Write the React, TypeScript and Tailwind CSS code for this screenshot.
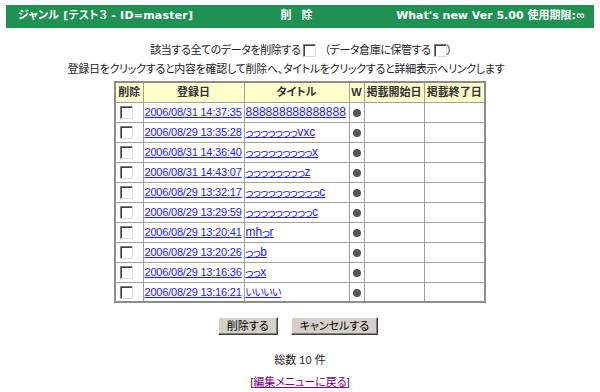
import React from "react";

const rows = [
  { date: "2006/08/31 14:37:35", title: "888888888888888" },
  { date: "2006/08/29 13:35:28", title: "っっっっっっっvxc" },
  { date: "2006/08/31 14:36:40", title: "っっっっっっっっっx" },
  { date: "2006/08/31 14:43:07", title: "っっっっっっっっz" },
  { date: "2006/08/29 13:32:17", title: "っっっっっっっっっっc" },
  { date: "2006/08/29 13:29:59", title: "っっっっっっっっっc" },
  { date: "2006/08/29 13:20:41", title: "mhっr" },
  { date: "2006/08/29 13:20:26", title: "っっb" },
  { date: "2006/08/29 13:16:36", title: "っっx" },
  { date: "2006/08/29 13:16:21", title: "いいいい" },
];

function Box() {
  return (
    <span className="inline-block w-[13px] h-[13px] bg-white border border-t-[#808080] border-l-[#808080] border-r-[#dcdcdc] border-b-[#dcdcdc] shadow-[inset_1px_1px_0_#404040] align-middle" />
  );
}

function Btn({ children }: { children: React.ReactNode }) {
  return (
    <button className="h-[18px] bg-[#d4d0c8] border border-t-white border-l-white border-r-[#404040] border-b-[#404040] shadow-[inset_-1px_-1px_0_#808080] text-[11px] leading-none text-black">
      {children}
    </button>
  );
}

// かな部分だけ詰めて表示
function Title({ text }: { text: string }) {
  return (
    <>
      {text.split("").map((c, i) =>
        c.charCodeAt(0) > 0x3000 ? (
          <span key={i} className="text-[10px] tracking-[-0.6px]">
            {c}
          </span>
        ) : (
          <span key={i}>{c}</span>
        )
      )}
    </>
  );
}

export default function App() {
  const th =
    "border border-[#a0a0a0] bg-[#ffffcc] h-[20px] p-0 text-[11px] font-bold text-[#333] text-center";
  const td = "border border-[#a0a0a0] h-[20px] p-0";

  return (
    <div className="w-[600px] h-[392px] bg-white font-['Liberation_Sans','Noto_Sans_CJK_JP',sans-serif] [font-feature-settings:'palt'] text-[12px] text-[#222] pt-[5px]">
      {/* ヘッダー */}
      <div className="mx-[6px] h-[23px] bg-[#1f9152] grid grid-cols-[1fr_auto_1fr] items-center pl-[12px] pr-[9px] text-white font-bold text-[11px] font-['DejaVu_Sans','Noto_Sans_CJK_JP',sans-serif]">
        <span className="tracking-[0.2px]">ジャンル [テスト３ - ID=master]</span>
        <span className="tracking-[10px]">削除</span>
        <span className="justify-self-end">What's new Ver 5.00 使用期限:∞</span>
      </div>

      <div className="flex flex-col items-center">
        <div className="mt-[15px] flex items-center h-[14px] text-[11px] tracking-[-0.4px] pl-[2px]">
          <span>該当する全てのデータを削除する</span>
          <span className="ml-[3px]">
            <Box />
          </span>
          <span className="ml-[8px]">（データ倉庫に保管する</span>
          <span className="ml-[3px]">
            <Box />
          </span>
          <span>）</span>
        </div>
        <div className="mt-[5px] mr-[28px] h-[14px] text-[11px] tracking-[-0.3px] leading-[14px]">
          登録日をクリックすると内容を確認して削除へ、タイトルをクリックすると詳細表示へリンクします
        </div>

        <table className="mt-[5px] border-collapse table-fixed border-2 border-[#8c8c8c] w-[370px]">
          <colgroup>
            <col className="w-[28px]" />
            <col className="w-[101px]" />
            <col className="w-[105px]" />
            <col className="w-[15px]" />
            <col className="w-[60px]" />
            <col className="w-[61px]" />
          </colgroup>
          <thead>
            <tr>
              <th className={th}>削除</th>
              <th className={th}>登録日</th>
              <th className={th}>タイトル</th>
              <th className={th + " text-[10px]"}>W</th>
              <th className={th}>掲載開始日</th>
              <th className={th}>掲載終了日</th>
            </tr>
          </thead>
          <tbody>
            {rows.map((r) => (
              <tr key={r.date}>
                <td className={td + " text-center"}>
                  <span className="relative -left-[3px]">
                    <Box />
                  </span>
                </td>
                <td className={td + " pl-[1px]"}>
                  <a
                    href="#"
                    className="text-[11px] tracking-[-0.2px] text-[#1a1aff] underline whitespace-nowrap"
                  >
                    {r.date}
                  </a>
                </td>
                <td className={td + " pl-[1px]"}>
                  <a
                    href="#"
                    className="text-[12px] text-[#1a1aff] underline whitespace-nowrap"
                  >
                    <Title text={r.title} />
                  </a>
                </td>
                <td className={td + " text-center"}>
                  <span className="inline-block w-[8px] h-[8px] rounded-full bg-[#555] align-middle" />
                </td>
                <td className={td}></td>
                <td className={td}></td>
              </tr>
            ))}
          </tbody>
        </table>

        <div className="mt-[14px] flex gap-[13px] mr-[4px]">
          <Btn>
            <span className="px-[8px]">削除する</span>
          </Btn>
          <Btn>
            <span className="px-[8px]">キャンセルする</span>
          </Btn>
        </div>

        <div className="mt-[17px] text-[11px] h-[14px]">総数 10 件</div>
        <div className="mt-[8px] text-[11px] h-[14px]">
          [
          <a href="#" className="text-[#800080] underline">
            編集メニューに戻る
          </a>
          ]
        </div>
      </div>
    </div>
  );
}
